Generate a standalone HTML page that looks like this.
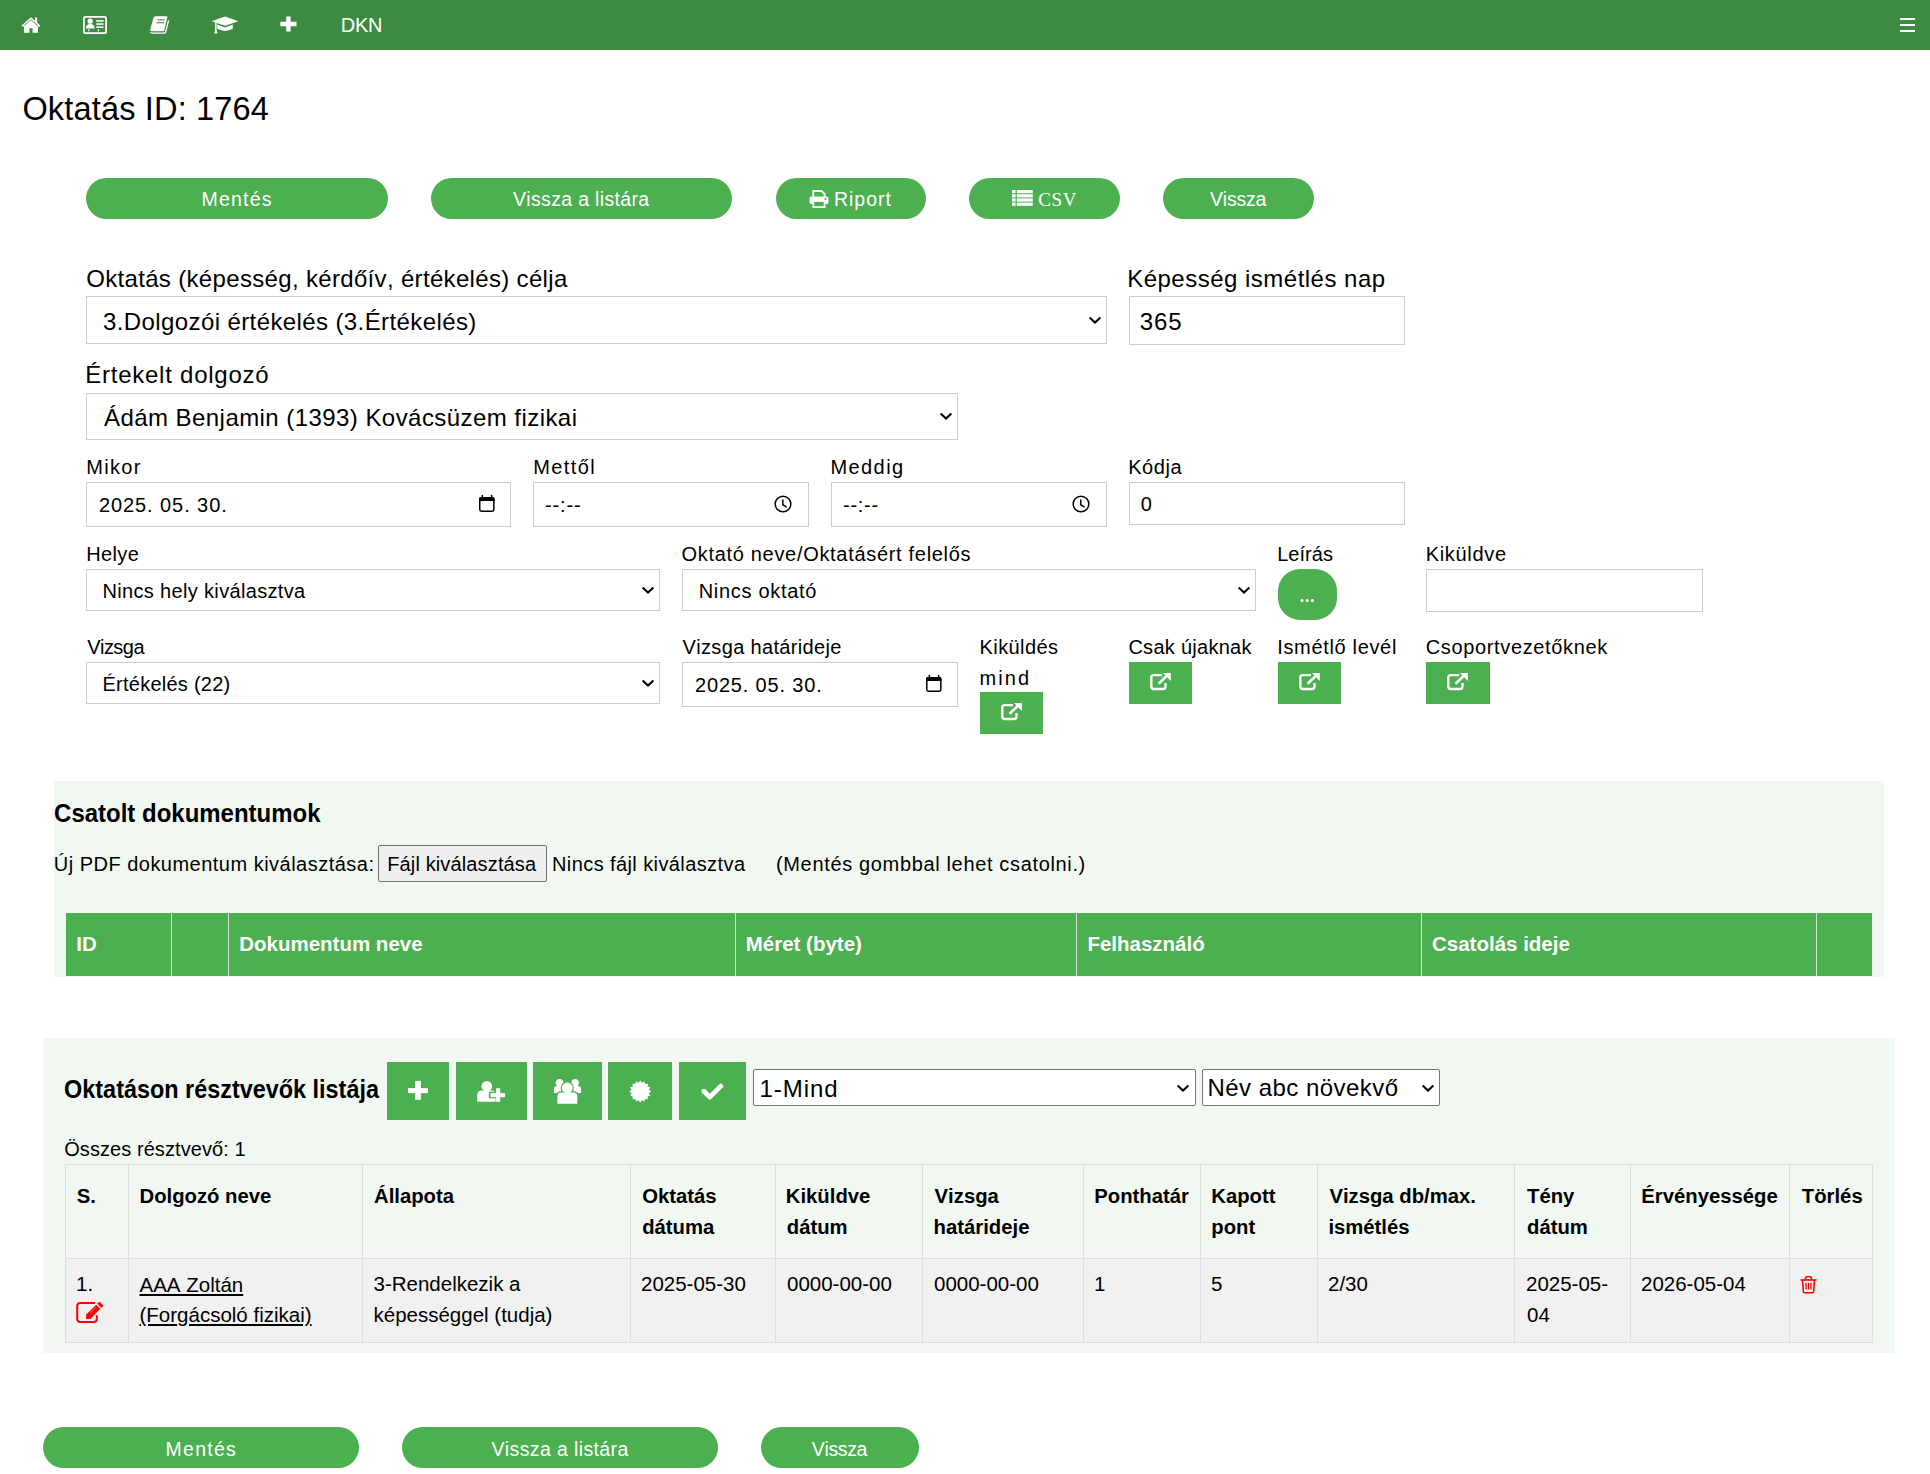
<!DOCTYPE html>
<html><head><meta charset="utf-8"><title>Oktatás</title>
<style>
html,body{margin:0;padding:0;background:#fff;width:1930px;height:1474px;overflow:hidden;position:relative}
body{font-family:'Liberation Sans',sans-serif}
.t{position:absolute;white-space:nowrap;font-kerning:none;font-variant-ligatures:none}
.b{position:absolute;display:block}
</style></head><body>
<div class="b" style="left:0px;top:0px;width:1930px;height:50px;background:#3d8b40"></div>
<svg class="b" style="left:21px;top:16px;" width="20" height="17" viewBox="0 0 20 17"><path d="M10 1.2 L0.6 9.6 L1.9 10.9 L3 9.9 V16.8 H8.4 V12.2 H11.6 V16.8 H17 V9.9 L18.1 10.9 L19.4 9.6 L16.2 6.7 V1.6 H14 V4.7 Z" fill="#fff"/><path d="M10 3.6 L3.2 9.7" stroke="#3d8b40" stroke-width="0.9" fill="none"/><path d="M10 3.6 L16.8 9.7" stroke="#3d8b40" stroke-width="0.9" fill="none"/></svg>
<svg class="b" style="left:83px;top:16px;" width="24" height="18" viewBox="0 0 24 18"><rect x="0.9" y="0.9" width="22.2" height="16.2" rx="1.6" fill="none" stroke="#fff" stroke-width="1.8"/><circle cx="7.2" cy="5.2" r="2.6" fill="#fff"/><path d="M2.8 12.4 Q2.8 7.9 7.2 7.9 Q11.6 7.9 11.6 12.4 Z" fill="#fff"/><rect x="13.2" y="4.2" width="7.4" height="1.5" fill="#fff"/><rect x="13.2" y="7.3" width="7.4" height="1.5" fill="#fff"/><rect x="13.2" y="10.4" width="7.4" height="1.5" fill="#fff"/><rect x="5.2" y="13.4" width="1.2" height="2" fill="#fff"/><rect x="14.8" y="13.4" width="1.2" height="2" fill="#fff"/></svg>
<svg class="b" style="left:149px;top:16px;" width="22" height="19" viewBox="0 0 22 19"><path d="M7 0.2 H17.2 Q18.6 0.2 18.3 1.6 L15.3 13.9 Q15 15.2 13.7 15.2 H2.4 Q0.9 15.2 1.2 13.8 L4.6 1.6 Q5 0.2 7 0.2 Z" fill="#fff"/><path d="M19.6 4.4 L16.6 16 Q16.3 17.2 15 17.2 H3.2 Q1.6 17.2 1.4 16" stroke="#fff" stroke-width="1.3" fill="none"/><rect x="8.3" y="3.3" width="7.4" height="1.1" fill="#3d8b40"/><rect x="7.6" y="6.1" width="7.4" height="1.1" fill="#3d8b40"/></svg>
<svg class="b" style="left:211px;top:16px;" width="28" height="18" viewBox="0 0 28 18"><path d="M14 0.6 L27.4 5.2 L14 9.8 L0.6 5.2 Z" fill="#fff"/><path d="M6.2 8.6 V12.8 Q14 17 21.8 12.8 V8.6 L14 11.4 Z" fill="#fff"/><path d="M4.1 6 H5.6 L5.6 13.5 L6.6 17.6 H3.2 L4.1 13.5 Z" fill="#fff"/></svg>
<svg class="b" style="left:280px;top:16px;" width="17" height="16" viewBox="0 0 17 16"><path d="M6.2 0.5 H10.6 V5.8 H16.6 V10.2 H10.6 V15.5 H6.2 V10.2 H0.4 V5.8 H6.2 Z" fill="#fff"/></svg>
<div class="t" style="left:340.70px;top:14.97px;font-size:20px;line-height:20px;color:#fff;letter-spacing:-0.250px;font-family:'Liberation Sans',sans-serif;">DKN</div>
<div class="b" style="left:1900px;top:18px;width:15px;height:2px;background:#fff"></div>
<div class="b" style="left:1900px;top:24px;width:15px;height:2px;background:#fff"></div>
<div class="b" style="left:1900px;top:30px;width:15px;height:2px;background:#fff"></div>
<div class="t" style="left:22.40px;top:92.99px;font-size:32.5px;line-height:32.5px;color:#000;letter-spacing:0.173px;font-family:'Liberation Sans',sans-serif;">Oktatás ID: 1764</div>
<div class="b" style="left:86px;top:178px;width:302px;height:41px;background:#4caf50;border-radius:20.5px"></div>
<div class="t" style="left:201.60px;top:189.99px;font-size:19.5px;line-height:19.5px;color:#fff;letter-spacing:1.180px;font-family:'Liberation Sans',sans-serif;">Mentés</div>
<div class="b" style="left:431px;top:178px;width:301px;height:41px;background:#4caf50;border-radius:20.5px"></div>
<div class="t" style="left:513.00px;top:189.99px;font-size:19.5px;line-height:19.5px;color:#fff;letter-spacing:0.333px;font-family:'Liberation Sans',sans-serif;">Vissza a listára</div>
<div class="b" style="left:776px;top:178px;width:150px;height:41px;background:#4caf50;border-radius:20.5px"></div>
<svg class="b" style="left:809px;top:190px;" width="20" height="18" viewBox="0 0 20 18"><path d="M4.3 7 V1 H12.5 L15.6 4 V7" fill="none" stroke="#fff" stroke-width="1.8"/><rect x="0.6" y="6.5" width="18.8" height="7.6" rx="1.6" fill="#fff"/><rect x="4.3" y="11" width="11.3" height="6.1" fill="#4caf50" stroke="#fff" stroke-width="1.8"/><circle cx="16.4" cy="9" r="1" fill="#4caf50"/></svg>
<div class="t" style="left:834.00px;top:189.99px;font-size:19.5px;line-height:19.5px;color:#fff;letter-spacing:0.960px;font-family:'Liberation Sans',sans-serif;">Riport</div>
<div class="b" style="left:969px;top:178px;width:151px;height:41px;background:#4caf50;border-radius:20.5px"></div>
<svg class="b" style="left:1012px;top:190px;" width="21" height="16" viewBox="0 0 21 16"><rect x="0" y="0" width="3.6" height="3.2" fill="#fff"/><rect x="4.8" y="0" width="16" height="3.2" fill="#fff"/><rect x="0" y="4.2" width="3.6" height="3.2" fill="#fff"/><rect x="4.8" y="4.2" width="16" height="3.2" fill="#fff"/><rect x="0" y="8.4" width="3.6" height="3.2" fill="#fff"/><rect x="4.8" y="8.4" width="16" height="3.2" fill="#fff"/><rect x="0" y="12.6" width="3.6" height="3.2" fill="#fff"/><rect x="4.8" y="12.6" width="16" height="3.2" fill="#fff"/></svg>
<div class="t" style="left:1038.30px;top:190.45px;font-size:19px;line-height:19px;color:#fff;letter-spacing:0.600px;font-family:'Liberation Serif',serif;">CSV</div>
<div class="b" style="left:1163px;top:178px;width:151px;height:41px;background:#4caf50;border-radius:20.5px"></div>
<div class="t" style="left:1210.00px;top:189.99px;font-size:19.5px;line-height:19.5px;color:#fff;letter-spacing:-0.200px;font-family:'Liberation Sans',sans-serif;">Vissza</div>
<div class="t" style="left:86.20px;top:266.68px;font-size:24px;line-height:24px;color:#000;letter-spacing:0.330px;font-family:'Liberation Sans',sans-serif;">Oktatás (képesség, kérdőív, értékelés) célja</div>
<div class="b" style="left:86px;top:296px;width:1021px;height:48px;background:#fff;border:1px solid #cccccc;box-sizing:border-box"></div>
<div class="t" style="left:103.00px;top:309.68px;font-size:24px;line-height:24px;color:#000;letter-spacing:0.397px;font-family:'Liberation Sans',sans-serif;">3.Dolgozói értékelés (3.Értékelés)</div>
<svg class="b" style="left:1087.5px;top:315px;" width="14" height="10" viewBox="0 0 14 10"><path d="M1.6 2.6 L7 7.6 L12.4 2.6" fill="none" stroke="#000" stroke-width="2.0"/></svg>
<div class="t" style="left:1127.20px;top:266.68px;font-size:24px;line-height:24px;color:#000;letter-spacing:0.490px;font-family:'Liberation Sans',sans-serif;">Képesség ismétlés nap</div>
<div class="b" style="left:1129px;top:296px;width:276px;height:49px;background:#fff;border:1px solid #cccccc;box-sizing:border-box"></div>
<div class="t" style="left:1139.80px;top:309.68px;font-size:24px;line-height:24px;color:#000;letter-spacing:0.850px;font-family:'Liberation Sans',sans-serif;">365</div>
<div class="t" style="left:85.20px;top:363.08px;font-size:24px;line-height:24px;color:#000;letter-spacing:0.760px;font-family:'Liberation Sans',sans-serif;">Értekelt dolgozó</div>
<div class="b" style="left:86px;top:393px;width:872px;height:47px;background:#fff;border:1px solid #cccccc;box-sizing:border-box"></div>
<div class="t" style="left:104.00px;top:406.18px;font-size:24px;line-height:24px;color:#000;letter-spacing:0.442px;font-family:'Liberation Sans',sans-serif;">Ádám Benjamin (1393) Kovácsüzem fizikai</div>
<svg class="b" style="left:938.5px;top:411px;" width="14" height="10" viewBox="0 0 14 10"><path d="M1.6 2.6 L7 7.6 L12.4 2.6" fill="none" stroke="#000" stroke-width="2.0"/></svg>
<div class="t" style="left:86.20px;top:457.07px;font-size:20px;line-height:20px;color:#000;letter-spacing:1.325px;font-family:'Liberation Sans',sans-serif;">Mikor</div>
<div class="b" style="left:86px;top:482px;width:425px;height:45px;background:#fff;border:1px solid #cccccc;box-sizing:border-box"></div>
<div class="t" style="left:98.90px;top:495.07px;font-size:20px;line-height:20px;color:#000;letter-spacing:0.925px;font-family:'Liberation Sans',sans-serif;">2025. 05. 30.</div>
<svg class="b" style="left:478.2px;top:493.9px;" width="18" height="19" viewBox="0 0 18 19"><rect x="1.75" y="3.75" width="14.1" height="13.4" rx="1.6" fill="none" stroke="#000" stroke-width="1.5"/><path d="M1 6.9 V5 Q1 3 3 3 H14.6 Q16.6 3 16.6 5 V6.9 Z" fill="#000"/><rect x="3.6" y="0.8" width="1.5" height="3" rx="0.7" fill="#000"/><rect x="12.9" y="0.8" width="1.5" height="3" rx="0.7" fill="#000"/></svg>
<div class="t" style="left:533.30px;top:457.07px;font-size:20px;line-height:20px;color:#000;letter-spacing:1.380px;font-family:'Liberation Sans',sans-serif;">Mettől</div>
<div class="b" style="left:533px;top:482px;width:276px;height:45px;background:#fff;border:1px solid #cccccc;box-sizing:border-box"></div>
<div class="t" style="left:545.00px;top:495.07px;font-size:20px;line-height:20px;color:#000;letter-spacing:0.875px;font-family:'Liberation Sans',sans-serif;">--:--</div>
<svg class="b" style="left:773.5px;top:495.4px;" width="18" height="18" viewBox="0 0 18 18"><circle cx="9" cy="9" r="7.85" fill="none" stroke="#000" stroke-width="1.5"/><path d="M8.8 4.6 V9.8 L12.6 12.2" fill="none" stroke="#000" stroke-width="1.5"/></svg>
<div class="t" style="left:830.50px;top:457.07px;font-size:20px;line-height:20px;color:#000;letter-spacing:1.400px;font-family:'Liberation Sans',sans-serif;">Meddig</div>
<div class="b" style="left:831px;top:482px;width:276px;height:45px;background:#fff;border:1px solid #cccccc;box-sizing:border-box"></div>
<div class="t" style="left:843.00px;top:495.07px;font-size:20px;line-height:20px;color:#000;letter-spacing:0.725px;font-family:'Liberation Sans',sans-serif;">--:--</div>
<svg class="b" style="left:1071.5px;top:495.4px;" width="18" height="18" viewBox="0 0 18 18"><circle cx="9" cy="9" r="7.85" fill="none" stroke="#000" stroke-width="1.5"/><path d="M8.8 4.6 V9.8 L12.6 12.2" fill="none" stroke="#000" stroke-width="1.5"/></svg>
<div class="t" style="left:1128.20px;top:457.07px;font-size:20px;line-height:20px;color:#000;letter-spacing:0.575px;font-family:'Liberation Sans',sans-serif;">Kódja</div>
<div class="b" style="left:1129px;top:482px;width:276px;height:43px;background:#fff;border:1px solid #cccccc;box-sizing:border-box"></div>
<div class="t" style="left:1140.80px;top:494.07px;font-size:20px;line-height:20px;color:#000;letter-spacing:0.000px;font-family:'Liberation Sans',sans-serif;">0</div>
<div class="t" style="left:86.20px;top:543.87px;font-size:20px;line-height:20px;color:#000;letter-spacing:0.375px;font-family:'Liberation Sans',sans-serif;">Helye</div>
<div class="b" style="left:86px;top:569px;width:574px;height:42px;background:#fff;border:1px solid #cccccc;box-sizing:border-box"></div>
<div class="t" style="left:102.50px;top:581.07px;font-size:20px;line-height:20px;color:#000;letter-spacing:0.338px;font-family:'Liberation Sans',sans-serif;">Nincs hely kiválasztva</div>
<svg class="b" style="left:640.5px;top:585px;" width="14" height="10" viewBox="0 0 14 10"><path d="M1.6 2.6 L7 7.6 L12.4 2.6" fill="none" stroke="#000" stroke-width="2.0"/></svg>
<div class="t" style="left:681.50px;top:543.87px;font-size:20px;line-height:20px;color:#000;letter-spacing:0.690px;font-family:'Liberation Sans',sans-serif;">Oktató neve/Oktatásért felelős</div>
<div class="b" style="left:682px;top:569px;width:574px;height:42px;background:#fff;border:1px solid #cccccc;box-sizing:border-box"></div>
<div class="t" style="left:698.70px;top:581.07px;font-size:20px;line-height:20px;color:#000;letter-spacing:0.691px;font-family:'Liberation Sans',sans-serif;">Nincs oktató</div>
<svg class="b" style="left:1236.5px;top:585px;" width="14" height="10" viewBox="0 0 14 10"><path d="M1.6 2.6 L7 7.6 L12.4 2.6" fill="none" stroke="#000" stroke-width="2.0"/></svg>
<div class="t" style="left:1277.20px;top:543.87px;font-size:20px;line-height:20px;color:#000;letter-spacing:0.040px;font-family:'Liberation Sans',sans-serif;">Leírás</div>
<div class="b" style="left:1278px;top:569px;width:59px;height:51px;background:#4caf50;border-radius:22px"></div>
<svg class="b" style="left:1290px;top:590px;" width="30" height="20" viewBox="1290 590 30 20"><circle cx="1302" cy="1300.6" r="1.55" fill="#fff" transform="translate(0,-700)"/><circle cx="1307.2" cy="1300.6" r="1.55" fill="#fff" transform="translate(0,-700)"/><circle cx="1312.4" cy="1300.6" r="1.55" fill="#fff" transform="translate(0,-700)"/></svg>
<div class="t" style="left:1425.70px;top:543.87px;font-size:20px;line-height:20px;color:#000;letter-spacing:0.686px;font-family:'Liberation Sans',sans-serif;">Kiküldve</div>
<div class="b" style="left:1426px;top:569px;width:277px;height:43px;background:#fff;border:1px solid #cccccc;box-sizing:border-box"></div>
<div class="t" style="left:87.20px;top:636.57px;font-size:20px;line-height:20px;color:#000;letter-spacing:-0.540px;font-family:'Liberation Sans',sans-serif;">Vizsga</div>
<div class="b" style="left:86px;top:662px;width:574px;height:42px;background:#fff;border:1px solid #cccccc;box-sizing:border-box"></div>
<div class="t" style="left:102.50px;top:674.07px;font-size:20px;line-height:20px;color:#000;letter-spacing:0.246px;font-family:'Liberation Sans',sans-serif;">Értékelés (22)</div>
<svg class="b" style="left:640.5px;top:678px;" width="14" height="10" viewBox="0 0 14 10"><path d="M1.6 2.6 L7 7.6 L12.4 2.6" fill="none" stroke="#000" stroke-width="2.0"/></svg>
<div class="t" style="left:682.50px;top:636.57px;font-size:20px;line-height:20px;color:#000;letter-spacing:0.344px;font-family:'Liberation Sans',sans-serif;">Vizsga határideje</div>
<div class="b" style="left:682px;top:662px;width:276px;height:45px;background:#fff;border:1px solid #cccccc;box-sizing:border-box"></div>
<div class="t" style="left:695.00px;top:675.07px;font-size:20px;line-height:20px;color:#000;letter-spacing:0.833px;font-family:'Liberation Sans',sans-serif;">2025. 05. 30.</div>
<svg class="b" style="left:924.8px;top:673.9px;" width="18" height="19" viewBox="0 0 18 19"><rect x="1.75" y="3.75" width="14.1" height="13.4" rx="1.6" fill="none" stroke="#000" stroke-width="1.5"/><path d="M1 6.9 V5 Q1 3 3 3 H14.6 Q16.6 3 16.6 5 V6.9 Z" fill="#000"/><rect x="3.6" y="0.8" width="1.5" height="3" rx="0.7" fill="#000"/><rect x="12.9" y="0.8" width="1.5" height="3" rx="0.7" fill="#000"/></svg>
<div class="t" style="left:979.50px;top:636.57px;font-size:20px;line-height:20px;color:#000;letter-spacing:0.429px;font-family:'Liberation Sans',sans-serif;">Kiküldés</div>
<div class="t" style="left:979.50px;top:667.87px;font-size:20px;line-height:20px;color:#000;letter-spacing:2.067px;font-family:'Liberation Sans',sans-serif;">mind</div>
<div class="b" style="left:980px;top:692px;width:63px;height:42px;background:#4caf50"></div>
<svg class="b" style="left:980px;top:692px;" width="63" height="42" viewBox="0 0 63 42"><path d="M33 13.1 H24.8 Q22.3 13.1 22.3 15.6 V24.6 Q22.3 27 24.8 27 H34 Q36.5 27 36.5 24.6 V20.9" fill="none" stroke="#fff" stroke-width="2.4"/><path d="M29.6 21.8 L38.4 13.2" stroke="#fff" stroke-width="2.7"/><path d="M34 11.1 H41.8 V18.9 Z" fill="#fff"/></svg>
<div class="t" style="left:1128.40px;top:636.57px;font-size:20px;line-height:20px;color:#000;letter-spacing:0.273px;font-family:'Liberation Sans',sans-serif;">Csak újaknak</div>
<div class="b" style="left:1129px;top:662px;width:63px;height:42px;background:#4caf50"></div>
<svg class="b" style="left:1129px;top:662px;" width="63" height="42" viewBox="0 0 63 42"><path d="M33 13.1 H24.8 Q22.3 13.1 22.3 15.6 V24.6 Q22.3 27 24.8 27 H34 Q36.5 27 36.5 24.6 V20.9" fill="none" stroke="#fff" stroke-width="2.4"/><path d="M29.6 21.8 L38.4 13.2" stroke="#fff" stroke-width="2.7"/><path d="M34 11.1 H41.8 V18.9 Z" fill="#fff"/></svg>
<div class="t" style="left:1277.20px;top:636.57px;font-size:20px;line-height:20px;color:#000;letter-spacing:0.667px;font-family:'Liberation Sans',sans-serif;">Ismétlő levél</div>
<div class="b" style="left:1278px;top:662px;width:63px;height:42px;background:#4caf50"></div>
<svg class="b" style="left:1278px;top:662px;" width="63" height="42" viewBox="0 0 63 42"><path d="M33 13.1 H24.8 Q22.3 13.1 22.3 15.6 V24.6 Q22.3 27 24.8 27 H34 Q36.5 27 36.5 24.6 V20.9" fill="none" stroke="#fff" stroke-width="2.4"/><path d="M29.6 21.8 L38.4 13.2" stroke="#fff" stroke-width="2.7"/><path d="M34 11.1 H41.8 V18.9 Z" fill="#fff"/></svg>
<div class="t" style="left:1425.70px;top:636.57px;font-size:20px;line-height:20px;color:#000;letter-spacing:0.650px;font-family:'Liberation Sans',sans-serif;">Csoportvezetőknek</div>
<div class="b" style="left:1426px;top:662px;width:64px;height:42px;background:#4caf50"></div>
<svg class="b" style="left:1426px;top:662px;" width="64" height="42" viewBox="0 0 64 42"><path d="M33 13.1 H24.8 Q22.3 13.1 22.3 15.6 V24.6 Q22.3 27 24.8 27 H34 Q36.5 27 36.5 24.6 V20.9" fill="none" stroke="#fff" stroke-width="2.4"/><path d="M29.6 21.8 L38.4 13.2" stroke="#fff" stroke-width="2.7"/><path d="M34 11.1 H41.8 V18.9 Z" fill="#fff"/></svg>
<div class="b" style="left:54px;top:781px;width:1830px;height:196px;background:#f1f8f1"></div>
<div class="t" style="left:53.80px;top:800.49px;font-size:26px;line-height:26px;font-weight:bold;color:#000;letter-spacing:0.000px;font-family:'Liberation Sans',sans-serif;transform:scaleX(0.9222);transform-origin:1px 0;">Csatolt dokumentumok</div>
<div class="t" style="left:53.80px;top:854.07px;font-size:20px;line-height:20px;color:#000;letter-spacing:0.483px;font-family:'Liberation Sans',sans-serif;">Új PDF dokumentum kiválasztása:</div>
<div class="b" style="left:378px;top:845px;width:169px;height:37px;background:#efefef;border:1px solid #767676;border-radius:2px;box-sizing:border-box"></div>
<div class="t" style="left:387.20px;top:854.07px;font-size:20px;line-height:20px;color:#000;letter-spacing:0.137px;font-family:'Liberation Sans',sans-serif;">Fájl kiválasztása</div>
<div class="t" style="left:552.00px;top:854.07px;font-size:20px;line-height:20px;color:#000;letter-spacing:0.405px;font-family:'Liberation Sans',sans-serif;">Nincs fájl kiválasztva</div>
<div class="t" style="left:776.00px;top:854.07px;font-size:20px;line-height:20px;color:#000;letter-spacing:0.652px;font-family:'Liberation Sans',sans-serif;">(Mentés gombbal lehet csatolni.)</div>
<div class="b" style="left:66px;top:913px;width:1806px;height:63px;background:#4caf50"></div>
<div class="b" style="left:171px;top:913px;width:1px;height:63px;background:#cfe6cf"></div>
<div class="b" style="left:228px;top:913px;width:1px;height:63px;background:#cfe6cf"></div>
<div class="b" style="left:735px;top:913px;width:1px;height:63px;background:#cfe6cf"></div>
<div class="b" style="left:1076px;top:913px;width:1px;height:63px;background:#cfe6cf"></div>
<div class="b" style="left:1421px;top:913px;width:1px;height:63px;background:#cfe6cf"></div>
<div class="b" style="left:1816px;top:913px;width:1px;height:63px;background:#cfe6cf"></div>
<div class="t" style="left:76.30px;top:933.85px;font-size:20.5px;line-height:20.5px;font-weight:bold;color:#fff;letter-spacing:0.000px;font-family:'Liberation Sans',sans-serif;">ID</div>
<div class="t" style="left:239.20px;top:933.85px;font-size:20.5px;line-height:20.5px;font-weight:bold;color:#fff;letter-spacing:0.000px;font-family:'Liberation Sans',sans-serif;">Dokumentum neve</div>
<div class="t" style="left:745.70px;top:933.85px;font-size:20.5px;line-height:20.5px;font-weight:bold;color:#fff;letter-spacing:0.000px;font-family:'Liberation Sans',sans-serif;">Méret (byte)</div>
<div class="t" style="left:1087.40px;top:933.85px;font-size:20.5px;line-height:20.5px;font-weight:bold;color:#fff;letter-spacing:0.000px;font-family:'Liberation Sans',sans-serif;">Felhasználó</div>
<div class="t" style="left:1432.00px;top:933.85px;font-size:20.5px;line-height:20.5px;font-weight:bold;color:#fff;letter-spacing:0.000px;font-family:'Liberation Sans',sans-serif;">Csatolás ideje</div>
<div class="b" style="left:43px;top:1038px;width:1852px;height:315px;background:#f1f8f1"></div>
<div class="t" style="left:64.20px;top:1076.39px;font-size:26px;line-height:26px;font-weight:bold;color:#000;letter-spacing:0.000px;font-family:'Liberation Sans',sans-serif;transform:scaleX(0.9003);transform-origin:1px 0;">Oktatáson résztvevők listája</div>
<div class="b" style="left:387px;top:1062px;width:62px;height:58px;background:#4caf50"></div>
<svg class="b" style="left:387px;top:1062px;" width="62" height="58" viewBox="387 1062 62 58"><rect x="408" y="1088.1" width="20" height="5" fill="#fff"/><rect x="415.1" y="1080.9" width="5.8" height="18.9" fill="#fff"/></svg>
<div class="b" style="left:456px;top:1062px;width:71px;height:58px;background:#4caf50"></div>
<svg class="b" style="left:456px;top:1062px;" width="71" height="58" viewBox="456 1062 71 58"><circle cx="486.8" cy="1086.2" r="5.3" fill="#fff"/><path d="M477.2 1101.8 V1095.5 Q477.2 1090.6 482 1090.6 H491.6 Q495.6 1090.6 495.6 1094.6 V1101.8 Z" fill="#fff"/><path d="M488.9 1091.7 H496.4 V1086.7 H501.6 V1091.7 H506.6 V1098.3 H501.6 V1103.3 H496.4 V1098.3 H488.9 Z" fill="#4caf50"/><rect x="490.5" y="1093.1" width="14.6" height="4.1" fill="#fff"/><rect x="496.1" y="1088.2" width="4.1" height="13.6" fill="#fff"/></svg>
<div class="b" style="left:533px;top:1062px;width:69px;height:58px;background:#4caf50"></div>
<svg class="b" style="left:533px;top:1062px;" width="69" height="58" viewBox="533 1062 69 58"><circle cx="559.5" cy="1082.7" r="3.8" fill="#fff"/><circle cx="575.1" cy="1082.7" r="3.8" fill="#fff"/><path d="M553.9 1093.1 V1089 Q553.9 1086 556.9 1086 H562 V1093.1 Z" fill="#fff"/><path d="M581 1093.1 V1089 Q581 1086 578 1086 H572.9 V1093.1 Z" fill="#fff"/><circle cx="567.3" cy="1088" r="6.6" fill="#4caf50"/><path d="M556 1104.5 V1096 Q556 1091.2 561 1091.2 H573.7 Q578.7 1091.2 578.7 1096 V1104.5 Z" fill="#4caf50"/><circle cx="567.3" cy="1088" r="5.4" fill="#fff"/><path d="M557.4 1103.7 V1096.5 Q557.4 1092.5 561.4 1092.5 H573.3 Q577.3 1092.5 577.3 1096.5 V1103.7 Z" fill="#fff"/></svg>
<div class="b" style="left:608px;top:1062px;width:64px;height:58px;background:#4caf50"></div>
<svg class="b" style="left:608px;top:1062px;" width="64" height="58" viewBox="608 1062 64 58"><polygon points="640.20,1080.60 641.94,1082.77 644.37,1081.43 645.14,1084.10 647.91,1083.79 647.60,1086.56 650.27,1087.33 648.93,1089.76 651.10,1091.50 648.93,1093.24 650.27,1095.67 647.60,1096.44 647.91,1099.21 645.14,1098.90 644.37,1101.57 641.94,1100.23 640.20,1102.40 638.46,1100.23 636.03,1101.57 635.26,1098.90 632.49,1099.21 632.80,1096.44 630.13,1095.67 631.47,1093.24 629.30,1091.50 631.47,1089.76 630.13,1087.33 632.80,1086.56 632.49,1083.79 635.26,1084.10 636.03,1081.43 638.46,1082.77" fill="#fff"/></svg>
<div class="b" style="left:679px;top:1062px;width:67px;height:58px;background:#4caf50"></div>
<svg class="b" style="left:679px;top:1062px;" width="67" height="58" viewBox="679 1062 67 58"><path d="M703.9 1091.2 L709.8 1097.1 L720.8 1086.1" fill="none" stroke="#fff" stroke-width="4.8" stroke-linecap="round" stroke-linejoin="round"/></svg>
<div class="b" style="left:753px;top:1069px;width:443px;height:37px;background:#fff;border:1px solid #767676;border-radius:2px;box-sizing:border-box"></div>
<div class="t" style="left:759.40px;top:1076.68px;font-size:24px;line-height:24px;color:#000;letter-spacing:0.980px;font-family:'Liberation Sans',sans-serif;">1-Mind</div>
<svg class="b" style="left:1176.4px;top:1082.5px;" width="14" height="10" viewBox="0 0 14 10"><path d="M1.6 2.6 L7 7.6 L12.4 2.6" fill="none" stroke="#000" stroke-width="2.0"/></svg>
<div class="b" style="left:1202px;top:1069px;width:238px;height:37px;background:#fff;border:1px solid #767676;border-radius:2px;box-sizing:border-box"></div>
<div class="t" style="left:1207.50px;top:1076.48px;font-size:24px;line-height:24px;color:#000;letter-spacing:0.464px;font-family:'Liberation Sans',sans-serif;">Név abc növekvő</div>
<svg class="b" style="left:1420.9px;top:1082.5px;" width="14" height="10" viewBox="0 0 14 10"><path d="M1.6 2.6 L7 7.6 L12.4 2.6" fill="none" stroke="#000" stroke-width="2.0"/></svg>
<div class="t" style="left:64.20px;top:1139.47px;font-size:20px;line-height:20px;color:#000;letter-spacing:0.072px;font-family:'Liberation Sans',sans-serif;">Összes résztvevő: 1</div>
<div class="b" style="left:65px;top:1164px;width:1808px;height:179px;background:#f1f8f1;border:1px solid #dddddd;box-sizing:border-box"></div>
<div class="b" style="left:66px;top:1258px;width:1806px;height:84px;background:#f1f1f1"></div>
<div class="b" style="left:65px;top:1258px;width:1808px;height:1px;background:#dddddd"></div>
<div class="b" style="left:128px;top:1164px;width:1px;height:179px;background:#dddddd"></div>
<div class="b" style="left:362px;top:1164px;width:1px;height:179px;background:#dddddd"></div>
<div class="b" style="left:630px;top:1164px;width:1px;height:179px;background:#dddddd"></div>
<div class="b" style="left:775px;top:1164px;width:1px;height:179px;background:#dddddd"></div>
<div class="b" style="left:922px;top:1164px;width:1px;height:179px;background:#dddddd"></div>
<div class="b" style="left:1083px;top:1164px;width:1px;height:179px;background:#dddddd"></div>
<div class="b" style="left:1200px;top:1164px;width:1px;height:179px;background:#dddddd"></div>
<div class="b" style="left:1317px;top:1164px;width:1px;height:179px;background:#dddddd"></div>
<div class="b" style="left:1514px;top:1164px;width:1px;height:179px;background:#dddddd"></div>
<div class="b" style="left:1630px;top:1164px;width:1px;height:179px;background:#dddddd"></div>
<div class="b" style="left:1789px;top:1164px;width:1px;height:179px;background:#dddddd"></div>
<div class="t" style="left:76.70px;top:1186.12px;font-size:20.3px;line-height:20.3px;font-weight:bold;color:#000;letter-spacing:0.000px;font-family:'Liberation Sans',sans-serif;">S.</div>
<div class="t" style="left:139.50px;top:1186.12px;font-size:20.3px;line-height:20.3px;font-weight:bold;color:#000;letter-spacing:0.000px;font-family:'Liberation Sans',sans-serif;">Dolgozó neve</div>
<div class="t" style="left:374.00px;top:1186.12px;font-size:20.3px;line-height:20.3px;font-weight:bold;color:#000;letter-spacing:0.000px;font-family:'Liberation Sans',sans-serif;">Állapota</div>
<div class="t" style="left:642.20px;top:1186.12px;font-size:20.3px;line-height:20.3px;font-weight:bold;color:#000;letter-spacing:0.000px;font-family:'Liberation Sans',sans-serif;">Oktatás</div>
<div class="t" style="left:642.20px;top:1216.82px;font-size:20.3px;line-height:20.3px;font-weight:bold;color:#000;letter-spacing:0.000px;font-family:'Liberation Sans',sans-serif;">dátuma</div>
<div class="t" style="left:785.80px;top:1186.12px;font-size:20.3px;line-height:20.3px;font-weight:bold;color:#000;letter-spacing:0.000px;font-family:'Liberation Sans',sans-serif;">Kiküldve</div>
<div class="t" style="left:786.80px;top:1216.82px;font-size:20.3px;line-height:20.3px;font-weight:bold;color:#000;letter-spacing:0.000px;font-family:'Liberation Sans',sans-serif;">dátum</div>
<div class="t" style="left:934.60px;top:1186.12px;font-size:20.3px;line-height:20.3px;font-weight:bold;color:#000;letter-spacing:0.000px;font-family:'Liberation Sans',sans-serif;">Vizsga</div>
<div class="t" style="left:933.60px;top:1216.82px;font-size:20.3px;line-height:20.3px;font-weight:bold;color:#000;letter-spacing:0.000px;font-family:'Liberation Sans',sans-serif;">határideje</div>
<div class="t" style="left:1094.30px;top:1186.12px;font-size:20.3px;line-height:20.3px;font-weight:bold;color:#000;letter-spacing:0.000px;font-family:'Liberation Sans',sans-serif;">Ponthatár</div>
<div class="t" style="left:1211.30px;top:1186.12px;font-size:20.3px;line-height:20.3px;font-weight:bold;color:#000;letter-spacing:0.000px;font-family:'Liberation Sans',sans-serif;">Kapott</div>
<div class="t" style="left:1211.30px;top:1216.82px;font-size:20.3px;line-height:20.3px;font-weight:bold;color:#000;letter-spacing:0.000px;font-family:'Liberation Sans',sans-serif;">pont</div>
<div class="t" style="left:1329.40px;top:1186.12px;font-size:20.3px;line-height:20.3px;font-weight:bold;color:#000;letter-spacing:0.000px;font-family:'Liberation Sans',sans-serif;">Vizsga db/max.</div>
<div class="t" style="left:1328.40px;top:1216.82px;font-size:20.3px;line-height:20.3px;font-weight:bold;color:#000;letter-spacing:0.000px;font-family:'Liberation Sans',sans-serif;">ismétlés</div>
<div class="t" style="left:1527.00px;top:1186.12px;font-size:20.3px;line-height:20.3px;font-weight:bold;color:#000;letter-spacing:0.000px;font-family:'Liberation Sans',sans-serif;">Tény</div>
<div class="t" style="left:1527.00px;top:1216.82px;font-size:20.3px;line-height:20.3px;font-weight:bold;color:#000;letter-spacing:0.000px;font-family:'Liberation Sans',sans-serif;">dátum</div>
<div class="t" style="left:1641.30px;top:1186.12px;font-size:20.3px;line-height:20.3px;font-weight:bold;color:#000;letter-spacing:0.000px;font-family:'Liberation Sans',sans-serif;">Érvényessége</div>
<div class="t" style="left:1801.80px;top:1186.12px;font-size:20.3px;line-height:20.3px;font-weight:bold;color:#000;letter-spacing:0.000px;font-family:'Liberation Sans',sans-serif;">Törlés</div>
<div class="t" style="left:76.00px;top:1274.45px;font-size:20.5px;line-height:20.5px;color:#000;letter-spacing:0.000px;font-family:'Liberation Sans',sans-serif;">1.</div>
<div class="t" style="left:139.5px;top:1269.50px;font-size:20.5px;line-height:30.4px;color:#000;width:220px"><span style="text-decoration:underline">AAA Zoltán<br>(Forgácsoló fizikai)</span></div>
<div class="t" style="left:373.50px;top:1274.45px;font-size:20.5px;line-height:20.5px;color:#000;letter-spacing:0.000px;font-family:'Liberation Sans',sans-serif;">3-Rendelkezik a</div>
<div class="t" style="left:373.50px;top:1304.85px;font-size:20.5px;line-height:20.5px;color:#000;letter-spacing:0.000px;font-family:'Liberation Sans',sans-serif;">képességgel (tudja)</div>
<div class="t" style="left:641.00px;top:1274.45px;font-size:20.5px;line-height:20.5px;color:#000;letter-spacing:0.000px;font-family:'Liberation Sans',sans-serif;">2025-05-30</div>
<div class="t" style="left:787.00px;top:1274.45px;font-size:20.5px;line-height:20.5px;color:#000;letter-spacing:0.000px;font-family:'Liberation Sans',sans-serif;">0000-00-00</div>
<div class="t" style="left:934.00px;top:1274.45px;font-size:20.5px;line-height:20.5px;color:#000;letter-spacing:0.000px;font-family:'Liberation Sans',sans-serif;">0000-00-00</div>
<div class="t" style="left:1094.00px;top:1274.45px;font-size:20.5px;line-height:20.5px;color:#000;letter-spacing:0.000px;font-family:'Liberation Sans',sans-serif;">1</div>
<div class="t" style="left:1211.00px;top:1274.45px;font-size:20.5px;line-height:20.5px;color:#000;letter-spacing:0.000px;font-family:'Liberation Sans',sans-serif;">5</div>
<div class="t" style="left:1328.00px;top:1274.45px;font-size:20.5px;line-height:20.5px;color:#000;letter-spacing:0.000px;font-family:'Liberation Sans',sans-serif;">2/30</div>
<div class="t" style="left:1526.00px;top:1274.45px;font-size:20.5px;line-height:20.5px;color:#000;letter-spacing:0.000px;font-family:'Liberation Sans',sans-serif;">2025-05-</div>
<div class="t" style="left:1527.00px;top:1304.85px;font-size:20.5px;line-height:20.5px;color:#000;letter-spacing:0.000px;font-family:'Liberation Sans',sans-serif;">04</div>
<div class="t" style="left:1641.00px;top:1274.45px;font-size:20.5px;line-height:20.5px;color:#000;letter-spacing:0.000px;font-family:'Liberation Sans',sans-serif;">2026-05-04</div>
<svg class="b" style="left:70px;top:1295px;" width="40" height="35" viewBox="70 1295 40 35"><path d="M94.9 1302.9 H80.4 Q77.2 1302.9 77.2 1306.1 V1318.8 Q77.2 1322 80.4 1322 H93.6 Q96.8 1322 96.8 1318.8 V1315.2" fill="none" stroke="#ff0000" stroke-width="2"/><path d="M86.1 1319.1 L86.2 1314.6 L96.3 1304.8 L100.2 1308.8 L90.5 1319 Z" fill="#ff0000"/><path d="M97.1 1303.4 L99.5 1301.8 L103.4 1305.5 L101.4 1308 Z" fill="#ff0000"/><path d="M90.2 1313 L96 1307.4" stroke="#f1f1f1" stroke-width="0.5"/></svg>
<svg class="b" style="left:1800px;top:1275px;" width="17" height="19" viewBox="0 0 17 19"><path d="M0.5 5 H16.5" stroke="#ff0000" stroke-width="1.6"/><path d="M5.5 4.8 V3.3 Q5.5 1.8 7 1.8 H10 Q11.5 1.8 11.5 3.3 V4.8" fill="none" stroke="#ff0000" stroke-width="1.6"/><path d="M2.5 5.3 L3.3 16.5 Q3.4 17.8 4.7 17.8 H12.3 Q13.6 17.8 13.7 16.5 L14.5 5.3" fill="none" stroke="#ff0000" stroke-width="1.6"/><path d="M6 7.8 V14.5 M8.5 7.8 V14.5 M11 7.8 V14.5" stroke="#ff0000" stroke-width="1.3"/></svg>
<div class="b" style="left:43px;top:1427px;width:316px;height:41px;background:#4caf50;border-radius:20.5px"></div>
<div class="t" style="left:165.60px;top:1439.99px;font-size:19.5px;line-height:19.5px;color:#fff;letter-spacing:1.240px;font-family:'Liberation Sans',sans-serif;">Mentés</div>
<div class="b" style="left:402px;top:1427px;width:316px;height:41px;background:#4caf50;border-radius:20.5px"></div>
<div class="t" style="left:491.40px;top:1439.99px;font-size:19.5px;line-height:19.5px;color:#fff;letter-spacing:0.387px;font-family:'Liberation Sans',sans-serif;">Vissza a listára</div>
<div class="b" style="left:761px;top:1427px;width:158px;height:41px;background:#4caf50;border-radius:20.5px"></div>
<div class="t" style="left:811.80px;top:1439.99px;font-size:19.5px;line-height:19.5px;color:#fff;letter-spacing:-0.360px;font-family:'Liberation Sans',sans-serif;">Vissza</div>
</body></html>
